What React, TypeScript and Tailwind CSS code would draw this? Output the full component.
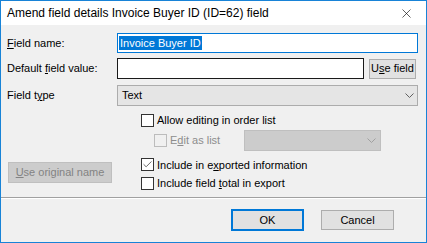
import { Check, X } from "lucide-react";

const ui = "font-['Liberation_Sans',Arial,sans-serif] text-[11px] text-black";

function Chevron({ color }: { color: string }) {
  return (
    <svg width="9" height="5" viewBox="0 0 9 5" className={color}>
      <path d="M0.5 0.5 L4.5 4.5 L8.5 0.5" fill="none" stroke="currentColor" strokeWidth="1" />
    </svg>
  );
}

function Box({ checked, disabled }: { checked?: boolean; disabled?: boolean }) {
  return (
    <span
      className={`flex h-[13px] w-[13px] shrink-0 items-center justify-center border ${
        disabled ? "border-[#bcbcbc] bg-[#f0f0f0]" : "border-[#333333] bg-white"
      }`}
    >
      {checked && <Check className="h-[11px] w-[11px] text-[#333333]" strokeWidth={1.6} />}
    </span>
  );
}

function CheckRow({
  children,
  checked,
  disabled,
}: {
  children: React.ReactNode;
  checked?: boolean;
  disabled?: boolean;
}) {
  return (
    <label className={`flex items-center gap-[3px] ${disabled ? "text-[#8d8d8d]" : ""}`}>
      <Box checked={checked} disabled={disabled} />
      <span>{children}</span>
    </label>
  );
}

export default function App() {
  return (
    <div className={`${ui} flex h-[243px] w-[427px] flex-col border border-[#1883d7] bg-[#f0f0f0]`}>
      <div className="flex h-[24px] shrink-0 items-center justify-between bg-white pl-[6px] pr-[12px]">
        <span className="text-[12px]">Amend field details Invoice Buyer ID (ID=62) field</span>
        <X className="h-[15px] w-[15px] text-black" strokeWidth={1} />
      </div>

      <div className="flex flex-col pl-[6px] pr-[8px] pt-[8px]">
        <div className="flex h-[20px] items-center">
          <span className="w-[110px]">
            <u>F</u>ield name:
          </span>
          <div className="flex h-[20px] flex-1 items-center border border-[#0078d7] bg-white px-[1px]">
            <span className="bg-[#0078d7] px-[1px] leading-[14px] text-white">Invoice Buyer ID</span>
          </div>
        </div>

        <div className="mt-[5px] flex h-[21px] items-center">
          <span className="w-[110px]">
            Default <u>f</u>ield value:
          </span>
          <div className="h-[21px] w-[247px] border border-[#1a1a1a] bg-white" />
          <button className="ml-[5px] h-[20px] w-[47px] border border-[#adadad] bg-[#e1e1e1]">
            U<u>s</u>e field
          </button>
        </div>

        <div className="mt-[6px] flex h-[21px] items-center">
          <span className="w-[110px]">
            Field t<u>y</u>pe
          </span>
          <div className="flex h-[21px] flex-1 items-center justify-between border border-[#acacac] bg-[#e5e5e5] pl-[4px] pr-[3px]">
            <span>Text</span>
            <Chevron color="text-[#606060]" />
          </div>
        </div>

        <div className="mt-[4px] grid grid-cols-[134px_1fr] grid-rows-[20px_21px_22px_21px]">
          <div className="col-start-2 row-start-1 flex items-center">
            <CheckRow>Allow editing in order list</CheckRow>
          </div>
          <div className="col-start-2 row-start-2 flex items-center pl-[13px]">
            <div className="w-[90px]">
              <CheckRow disabled>
                E<u>d</u>it as list
              </CheckRow>
            </div>
            <div className="flex h-[21px] w-[137px] items-center justify-end border border-[#bfbfbf] bg-[#cccccc] pr-[4px]">
              <Chevron color="text-[#a0a0a0]" />
            </div>
          </div>
          <div className="col-start-1 row-span-2 row-start-3 flex items-center pl-[1px]">
            <button className="h-[21px] w-[104px] border border-[#bfbfbf] bg-[#cccccc] text-[#838383]">
              <u>U</u>se original name
            </button>
          </div>
          <div className="col-start-2 row-start-3 flex items-end">
            <CheckRow checked>
              Include in e<u>x</u>ported information
            </CheckRow>
          </div>
          <div className="col-start-2 row-start-4 flex items-center">
            <CheckRow>
              Include field <u>t</u>otal in export
            </CheckRow>
          </div>
        </div>
      </div>

      <div className="mt-[3px] border-t border-[#a0a0a0]">
        <div className="border-t border-white" />
      </div>

      <div className="flex justify-end gap-[17px] pr-[32px] pt-[10px]">
        <button className="h-[22px] w-[73px] border-2 border-[#0078d7] bg-[#e1e1e1]">OK</button>
        <button className="mt-[1px] h-[20px] w-[73px] border border-[#adadad] bg-[#e1e1e1]">Cancel</button>
      </div>
    </div>
  );
}
